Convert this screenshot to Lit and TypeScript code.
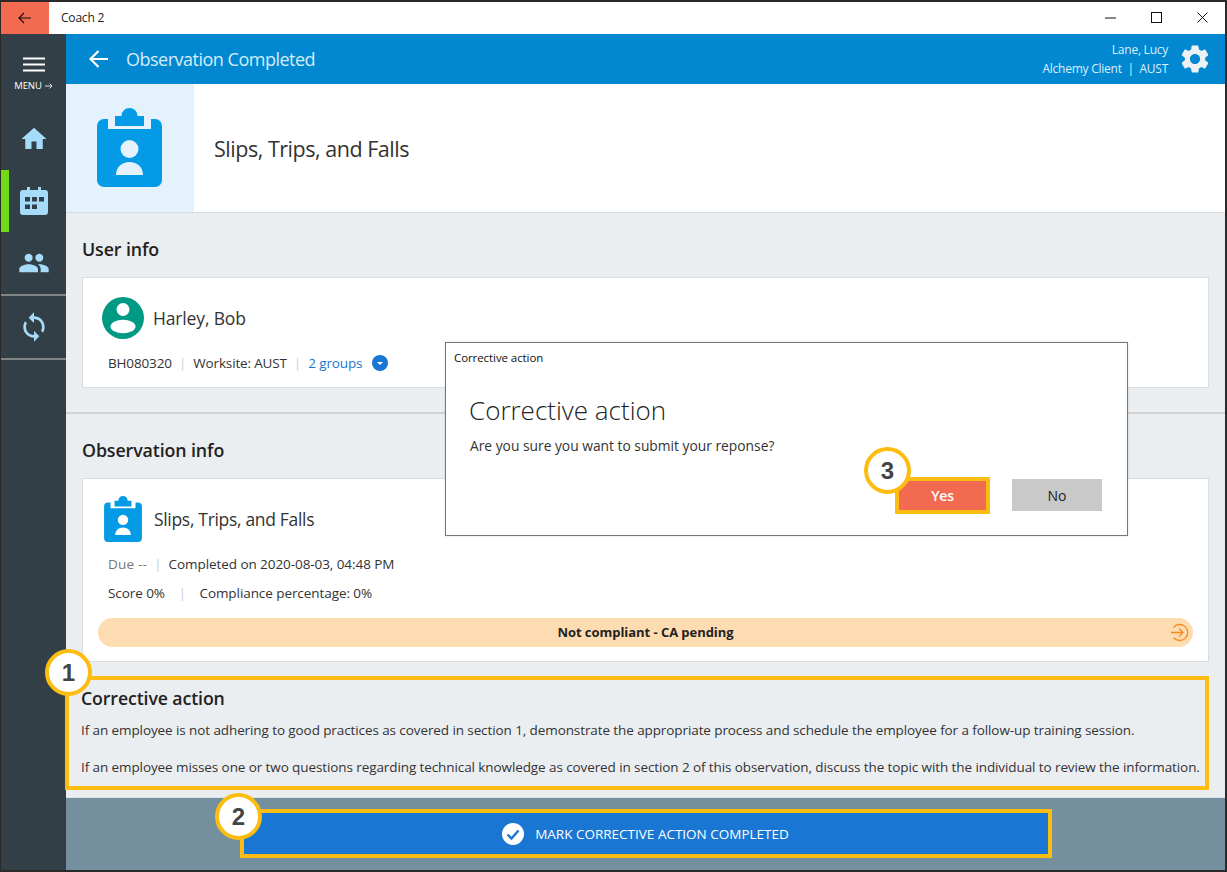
import { LitElement, html, css } from "lit";
import { customElement } from "lit/decorators.js";

const clip = (w: number, h: number, notch: string) => html`<svg width=${w} height=${h} viewBox="0 0 65 79">
  <rect x="0" y="11" width="65" height="68" rx="7" fill="#039BE5"></rect>
  <rect x="11" y="0" width="43" height="21" fill=${notch}></rect>
  <path d="M18 8h6.5a8 8 0 0 1 16 0H47v10H18z" fill="#039BE5"></path>
  <circle cx="32.5" cy="41" r="9" fill=${notch}></circle>
  <path d="M19 67c0-8 6-13 13.5-13S46 59 46 67z" fill=${notch}></path>
</svg>`;

const icon = (d: string, size: number, fill: string) => html`<svg width=${size} height=${size} viewBox="0 0 24 24"><path d=${d} fill=${fill}></path></svg>`;

const HOME = "M10 20v-6h4v6h5v-8h3L12 3 2 12h3v8z";
const PEOPLE = "M16 11c1.66 0 2.99-1.34 2.99-3S17.66 5 16 5c-1.66 0-3 1.34-3 3s1.34 3 3 3zm-8 0c1.66 0 2.99-1.34 2.99-3S9.66 5 8 5C6.34 5 5 6.34 5 8s1.34 3 3 3zm0 2c-2.33 0-7 1.17-7 3.5V19h14v-2.5c0-2.33-4.67-3.5-7-3.5zm8 0c-.29 0-.62.02-.97.05 1.16.84 1.97 1.97 1.97 3.45V19h6v-2.5c0-2.33-4.67-3.5-7-3.5z";
const SYNC = "M12 4V1L8 5l4 4V6c3.31 0 6 2.69 6 6 0 1.01-.25 1.97-.7 2.8l1.46 1.46C19.54 15.03 20 13.57 20 12c0-4.42-3.58-8-8-8zm0 14c-3.31 0-6-2.69-6-6 0-1.01.25-1.97.7-2.8L5.24 7.74C4.46 8.97 4 10.43 4 12c0 4.42 3.58 8 8 8v3l4-4-4-4v3z";
const GEAR = "M19.14 12.94c.04-.3.06-.61.06-.94 0-.32-.02-.64-.07-.94l2.03-1.58c.18-.14.23-.41.12-.61l-1.92-3.32c-.12-.22-.37-.29-.59-.22l-2.39.96c-.5-.38-1.03-.7-1.62-.94l-.36-2.54c-.04-.24-.24-.41-.48-.41h-3.84c-.24 0-.43.17-.47.41l-.36 2.54c-.59.24-1.13.57-1.62.94l-2.39-.96c-.22-.08-.47 0-.59.22L2.74 8.87c-.12.21-.08.47.12.61l2.03 1.58c-.05.3-.09.63-.09.94s.02.64.07.94l-2.03 1.58c-.18.14-.23.41-.12.61l1.92 3.32c.12.22.37.29.59.22l2.39-.96c.5.38 1.03.7 1.62.94l.36 2.54c.05.24.24.41.48.41h3.84c.24 0 .44-.17.47-.41l.36-2.54c.59-.24 1.13-.56 1.62-.94l2.39.96c.22.08.47 0 .59-.22l1.92-3.32c.12-.22.07-.47-.12-.61l-2.01-1.58zM12 15.6c-1.98 0-3.6-1.62-3.6-3.6s1.62-3.6 3.6-3.6 3.6 1.62 3.6 3.6-1.62 3.6-3.6 3.6z";

@customElement("app-root")
export class AppRoot extends LitElement {
  static styles = css`
    :host { display: block; position: relative; width: 1227px; height: 872px; overflow: hidden; font-family: "Open Sans", "Noto Sans", sans-serif; color: #2b2b2b; }
    * { box-sizing: border-box; }
    svg { display: block; flex: none; }
    .window { width: 1227px; height: 872px; display: flex; flex-direction: column; border-style: solid; border-color: #2a2a2a; border-width: 2px 2px 2px 1px; background: #fff; }
    .titlebar { height: 32px; flex: none; display: flex; align-items: center; }
    .tb-back { width: 48px; height: 32px; background: #f26b50; display: flex; align-items: center; justify-content: center; }
    .tb-title { margin-left: 12px; font-size: 12px; letter-spacing: -0.2px; color: #222; flex: 1; padding-bottom: 2px; }
    .ctrl { width: 46px; height: 32px; display: flex; align-items: center; justify-content: center; padding-bottom: 1px; }
    .body { flex: 1; display: flex; min-height: 0; }
    .side { width: 65px; flex: none; background: #323f47; display: flex; flex-direction: column; }
    .menu { height: 74px; display: flex; flex-direction: column; align-items: center; padding-top: 23px; color: #fff; }
    .menu-label { font-size: 9.5px; letter-spacing: -0.05px; margin-top: 8px; display: flex; align-items: center; gap: 3px; line-height: 12px; }
    .nav { height: 62px; display: flex; align-items: center; justify-content: center; padding-left: 1px; border-left: 8px solid transparent; padding-right: 8px; }
    .nav.active { border-left-color: #6fdc16; }
    .rule { height: 2px; background: #7f8486; flex: none; }
    .main { flex: 1; display: flex; flex-direction: column; min-width: 0; background: #ebeef1; }
    .head { height: 50px; flex: none; background: #0288d1; display: flex; align-items: center; padding: 0 13px 0 23px; color: #fff; }
    .head-title { margin-left: 18px; font-size: 18px; letter-spacing: -0.5px; color: #d5ecf9; flex: 1; line-height: 50px; }
    .who { text-align: right; font-size: 12px; letter-spacing: -0.25px; line-height: 19px; color: #dceffa; margin-right: 10px; }
    .hero { height: 129px; flex: none; background: #fff; display: flex; align-items: center; border-bottom: 1px solid #d5dade; }
    .hero-pane { width: 128px; height: 128px; background: #e3f2fd; display: flex; align-items: center; justify-content: center; padding: 0 1px 1px 0; }
    .hero-title { margin-left: 20px; font-size: 21.5px; letter-spacing: -0.47px; color: #333; }
    .section { padding: 0 16px; }
    .sec-h { height: 64px; display: flex; align-items: center; font-size: 17.8px; font-weight: 600; letter-spacing: -0.1px; color: #222; padding-top: 8px; }
    .card { background: #fff; border: 1px solid #d8dde1; }
    .user-card { height: 111px; padding: 19px 19px 0; }
    .user-row { display: flex; align-items: center; gap: 9px; height: 42px; font-size: 17.5px; letter-spacing: -0.15px; color: #333; }
    .meta { display: flex; align-items: center; font-size: 13.5px; letter-spacing: -0.07px; color: #333; height: 20px; }
    .user-card .meta { margin: 14px 0 0 6px; letter-spacing: -0.15px; }
    .sep { color: #c8c8c8; margin: 0 7.5px; font-size: 12px; }
    .link { color: #1976d2; }
    .dot { margin-left: 10px; }
    .divider { height: 2px; background: #d0d2d4; margin-top: 24px; flex: none; }
    .obs-card { height: 184px; padding: 17px 15px 0; }
    .obs-row { display: flex; align-items: center; gap: 12px; height: 46px; margin-left: 6px; font-size: 17.5px; letter-spacing: -0.32px; color: #333; }
    .obs-card .meta { margin-left: 10px; }
    .m1 { margin-top: 12px; }
    .m2 { margin-top: 9px; }
    .muted { color: #777; letter-spacing: 0.2px; }
    .sep.wide { margin: 0 14px; }
    .pill { margin: 15px 0 0 0; height: 29px; border-radius: 15px; background: #fedcb1; display: flex; align-items: center; justify-content: center; position: relative; font-size: 13px; font-weight: 700; letter-spacing: -0.05px; color: #222; padding-bottom: 1px; }
    .pill svg { position: absolute; right: 4px; top: 5px; }
    .ca { margin: 14px 0 0 -17px; height: 114px; border: 4px solid #fdbd10; padding: 6px 0 0 12px; position: relative; white-space: nowrap; }
    .ca-h { font-size: 17.7px; font-weight: 600; letter-spacing: -0.1px; color: #222; line-height: 24px; }
    .ca-p { font-size: 13.5px; letter-spacing: -0.095px; color: #333; margin: 0; line-height: 18px; }
    .p1 { margin-top: 11px; }
    .p2 { margin-top: 19px; }
    .bar { flex: 1; margin-top: 7px; background: #74909e; display: flex; justify-content: center; padding-top: 11px; border-top: 1px solid #dfe3e6; }
    .cta { width: 812px; height: 49px; background: #1976d2; border: 4px solid #fdbd10; padding-top: 1px; display: flex; align-items: center; justify-content: center; gap: 11px; color: #fff; font-size: 13.5px; }
    .dialog { position: absolute; left: 445px; top: 342px; width: 683px; height: 194px; background: #fff; border: 1px solid #777; box-shadow: 0 0 2px rgba(0,0,0,.15); display: flex; flex-direction: column; }
    .dlg-bar { font-size: 11.5px; letter-spacing: -0.08px; color: #111; padding: 7px 0 0 8px; line-height: 15px; }
    .dlg-h { font-size: 26px; font-weight: 300; color: #222; margin: 28px 0 0 23px; line-height: 34px; }
    .dlg-p { font-size: 13.8px; color: #333; margin: 9px 0 0 24px; line-height: 20px; }
    .dlg-btns { margin-top: auto; padding: 0 25px 21px 0; display: flex; justify-content: flex-end; align-items: center; gap: 22px; }
    .btn { font-size: 14px; display: flex; align-items: center; justify-content: center; }
    .yes { width: 95px; height: 37px; background: #f26b50; border: 4px solid #fdbd10; color: #fff; font-weight: 600; letter-spacing: -0.2px; }
    .no { width: 90px; height: 32px; background: #c9c9c9; color: #222; margin-bottom: 1px; }
    .badge { position: absolute; width: 47px; height: 47px; border-radius: 50%; background: #fff; border: 4px solid #fdbd10; display: flex; align-items: center; justify-content: center; font-family: "Liberation Sans", sans-serif; font-size: 24px; font-weight: 700; color: #444; }
    .b1 { left: 45px; top: 649px; }
    .b2 { left: 215px; top: 793px; }
    .b3 { left: 864px; top: 447px; }
  `;

  render() {
    return html`
      <div class="window">
        <div class="titlebar">
          <div class="tb-back">
            <svg width="14" height="12" viewBox="0 0 14 12"><path d="M13 6H1M6 1 1 6l5 5" fill="none" stroke="#111" stroke-width="1.1"></path></svg>
          </div>
          <div class="tb-title">Coach 2</div>
          <div class="ctrl"><svg width="11" height="2" viewBox="0 0 11 2"><path d="M0 1h11" stroke="#111" stroke-width="1"></path></svg></div>
          <div class="ctrl"><svg width="11" height="11" viewBox="0 0 11 11"><rect x=".5" y=".5" width="10" height="10" fill="none" stroke="#111"></rect></svg></div>
          <div class="ctrl"><svg width="11" height="11" viewBox="0 0 11 11"><path d="M.5.5l10 10M10.5.5l-10 10" stroke="#111" stroke-width="1"></path></svg></div>
        </div>
        <div class="body">
          <nav class="side">
            <div class="menu">
              <svg width="22" height="15" viewBox="0 0 22 15"><path d="M0 1.500h22M0 7.500h22M0 13.500h22" stroke="#fff" stroke-width="2.200"></path></svg>
              <div class="menu-label">MENU
                <svg width="8" height="8" viewBox="0 0 8 8"><path d="M0 4h7M4.500 1.500 7 4 4.500 6.500" fill="none" stroke="#ddd" stroke-width="1"></path></svg>
              </div>
            </div>
            <div class="nav">${icon(HOME, 30, "#a6dcfa")}</div>
            <div class="nav active">
              <svg width="28" height="28" viewBox="0 0 28 28"><path d="M3 3h4V0h3v3h8V0h3v3h4a3 3 0 0 1 3 3v19a3 3 0 0 1-3 3H3a3 3 0 0 1-3-3V6a3 3 0 0 1 3-3z" fill="#a6dcfa"></path><g fill="#323f47"><rect x="5" y="10" width="5" height="4.500"></rect><rect x="12" y="10" width="5" height="4.500"></rect><rect x="19" y="10" width="5" height="4.500"></rect><rect x="5" y="17.500" width="5" height="4.500"></rect><rect x="12" y="17.500" width="5" height="4.500"></rect></g></svg>
            </div>
            <div class="nav">${icon(PEOPLE, 32, "#a6dcfa")}</div>
            <div class="rule"></div>
            <div class="nav">${icon(SYNC, 32, "#a6dcfa")}</div>
            <div class="rule"></div>
          </nav>
          <div class="main">
            <header class="head">
              <svg width="19" height="18" viewBox="0 0 19 18"><path d="M19 9H2M9.500 1 1.500 9l8 8" fill="none" stroke="#fff" stroke-width="2.200"></path></svg>
              <div class="head-title">Observation Completed</div>
              <div class="who">Lane, Lucy<br />Alchemy Client&nbsp; |&nbsp; AUST</div>
              ${icon(GEAR, 34, "#eef1f4")}
            </header>
            <div class="hero">
              <div class="hero-pane">${clip(65, 79, "#e3f2fd")}</div>
              <div class="hero-title">Slips, Trips, and Falls</div>
            </div>
            <div class="section">
              <div class="sec-h">User info</div>
              <div class="card user-card">
                <div class="user-row">
                  <svg width="42" height="42" viewBox="0 0 42 42"><circle cx="21" cy="21" r="21" fill="#009a84"></circle><circle cx="21" cy="12.500" r="6.500" fill="#fff"></circle><ellipse cx="21" cy="29.500" rx="12.500" ry="6.700" fill="#fff"></ellipse></svg>
                  Harley, Bob
                </div>
                <div class="meta">BH080320<span class="sep">|</span>Worksite: AUST<span class="sep">|</span><span class="link">2 groups</span>
                  <svg class="dot" width="16" height="16" viewBox="0 0 16 16"><circle cx="8" cy="8" r="8" fill="#1976d2"></circle><path d="M5 7h6l-3 3z" fill="#fff"></path></svg>
                </div>
              </div>
            </div>
            <div class="divider"></div>
            <div class="section">
              <div class="sec-h">Observation info</div>
              <div class="card obs-card">
                <div class="obs-row">${clip(38, 46, "#fff")}Slips, Trips, and Falls</div>
                <div class="meta m1"><span class="muted">Due --</span><span class="sep">|</span>Completed on 2020-08-03, 04:48 PM</div>
                <div class="meta m2">Score 0%<span class="sep wide">|</span>Compliance percentage: 0%</div>
                <div class="pill">Not compliant - CA pending
                  <svg width="19" height="19" viewBox="0 0 19 19"><path d="M3.500 4.500a8 8 0 1 1 0 10" fill="none" stroke="#f58a23" stroke-width="1.300"></path><path d="M1 9.500h12M9 5.500l4 4-4 4" fill="none" stroke="#f58a23" stroke-width="1.300"></path></svg>
                </div>
              </div>
              <div class="ca">
                <div class="ca-h">Corrective action</div>
                <p class="ca-p p1">If an employee is not adhering to good practices as covered in section 1, demonstrate the appropriate process and schedule the employee for a follow-up training session.</p>
                <p class="ca-p p2">If an employee misses one or two questions regarding technical knowledge as covered in section 2 of this observation, discuss the topic with the individual to review the information.</p>
              </div>
            </div>
            <div class="bar">
              <div class="cta">
                <svg width="22" height="22" viewBox="0 0 22 22"><circle cx="11" cy="11" r="11" fill="#fff"></circle><path d="M5.500 11.500 9.500 15.500 16.500 7.500" fill="none" stroke="#1976d2" stroke-width="2.400"></path></svg>
                MARK CORRECTIVE ACTION COMPLETED
              </div>
            </div>
          </div>
        </div>
      </div>
      <div class="dialog">
        <div class="dlg-bar">Corrective action</div>
        <div class="dlg-h">Corrective action</div>
        <div class="dlg-p">Are you sure you want to submit your reponse?</div>
        <div class="dlg-btns">
          <div class="btn yes">Yes</div>
          <div class="btn no">No</div>
        </div>
      </div>
      <div class="badge b1">1</div>
      <div class="badge b2">2</div>
      <div class="badge b3">3</div>
    `;
  }
}
